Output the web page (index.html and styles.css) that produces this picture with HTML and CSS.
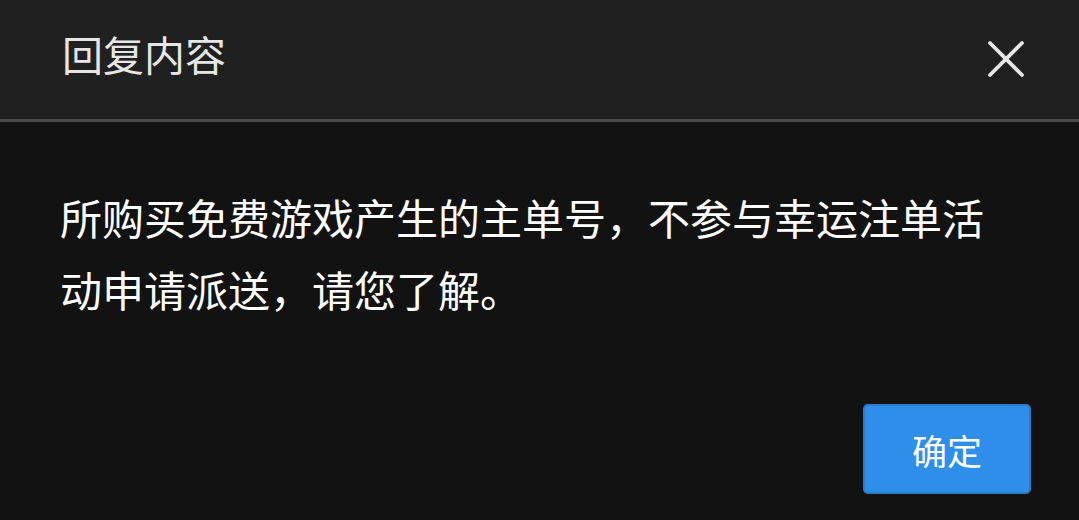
FILE: index.html
```html
<!DOCTYPE html>
<html lang="zh-CN">
<head>
    <meta charset="UTF-8">
    <title>回复内容</title>
    <link rel="stylesheet" href="styles.css">
</head>
<body>
<div class="dialog">
    <div class="dialog_head">
        <span class="dialog_title">回复内容</span>
        <span class="dialog_close">
            <svg width="38" height="38" viewBox="0 0 38 38">
                <path d="M3 3 L35 35 M35 3 L3 35" stroke="#e6e6e6" stroke-width="3.8" stroke-linecap="round"/>
            </svg>
        </span>
    </div>
    <div class="dialog_body">
        <p class="dialog_text">所购买免费游戏产生的主单号，不参与幸运注单活动申请派送，请您了解。</p>
    </div>
    <div class="dialog_foot">
        <input type="button" class="btn_ok" value="确定">
    </div>
</div>
</body>
</html>
```

FILE: styles.css
```css
html, body {
    margin: 0;
    padding: 0;
    background: #121212;
}

.dialog {
    width: 1079px;
    height: 520px;
    display: flex;
    flex-direction: column;
    font-family: "Noto Sans CJK SC", "Noto Sans", sans-serif;
}

.dialog_head {
    height: 119px;
    padding: 0 54px 0 62px;
    display: flex;
    align-items: center;
    justify-content: space-between;
    background: #202020;
    border-bottom: 3px solid #4a4a4a;
}

.dialog_title {
    font-size: 41px;
    color: #e6e6e6;
    line-height: 1;
    margin-top: -13px;
}

.dialog_close {
    display: flex;
    width: 38px;
    height: 38px;
    margin-top: -2px;
}

.dialog_body {
    padding: 0 60px;
    flex: 1;
}

.dialog_text {
    margin: 0;
    padding-top: 59px;
    font-size: 42px;
    line-height: 72px;
    color: #ffffff;
}

.dialog_foot {
    display: flex;
    justify-content: flex-end;
    padding: 0 48px 26px 0;
}

.btn_ok {
    width: 168px;
    height: 90px;
    background: #2f8eea;
    border: 2px solid #2a7ccb;
    border-radius: 5px;
    color: #ffffff;
    font-family: "Noto Sans CJK SC", "Noto Sans", sans-serif;
    font-size: 35px;
    padding: 0;
}
```
